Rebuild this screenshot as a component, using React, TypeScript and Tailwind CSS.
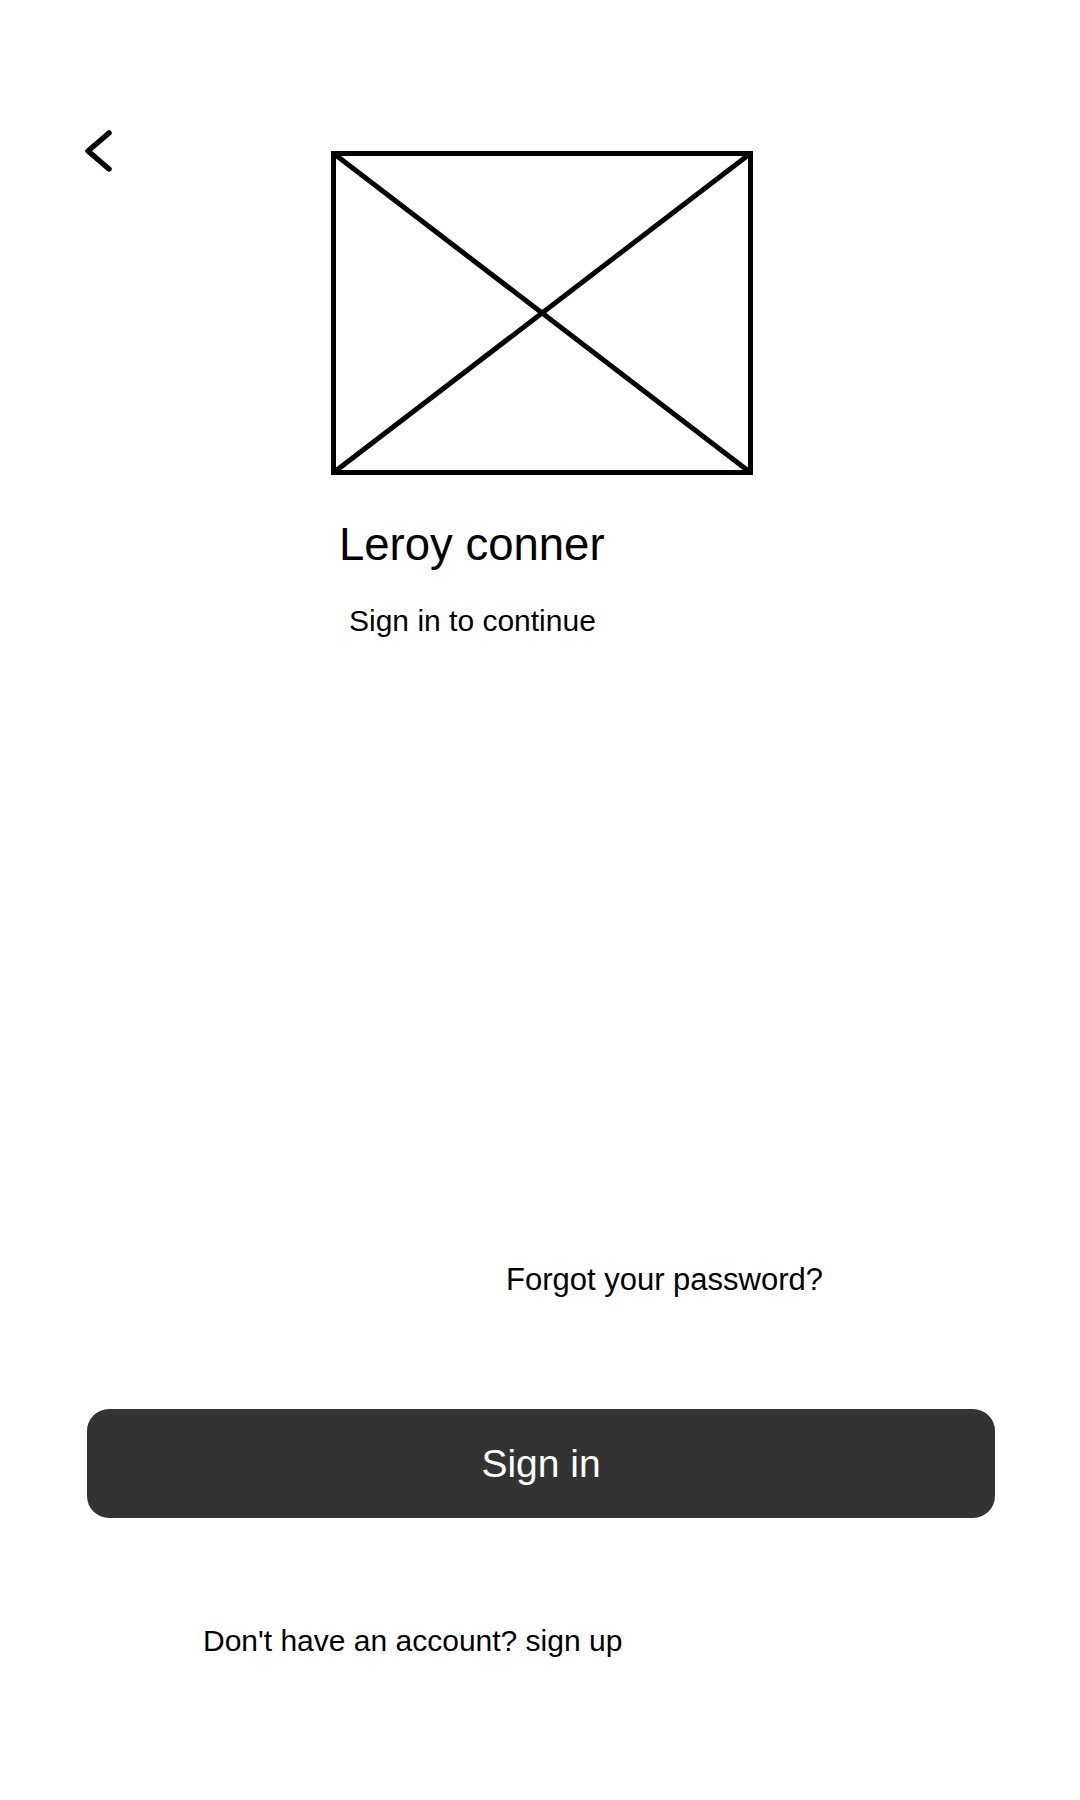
export default function App() {
  return (
    <div className="min-h-[1800px] w-[1080px] bg-white text-black font-['Liberation_Sans',Arial,sans-serif]">
      {/* top: back button + image placeholder */}
      <div className="flex items-start pl-[83px] pt-[129px]">
        <button className="h-[44px] w-[30px]" aria-label="Back">
          <svg width="30" height="44" viewBox="0 0 30 44" fill="none">
            <polyline
              points="26,4 5,22 26,40"
              stroke="#000"
              strokeWidth="5.5"
              strokeLinecap="round"
              strokeLinejoin="round"
            />
          </svg>
        </button>
        <div className="ml-[218px] mt-[22px]">
          <svg width="422" height="324" viewBox="0 0 422 324" fill="none">
            <rect x="2.5" y="2.5" width="417" height="319" stroke="#000" strokeWidth="5" />
            <line x1="2" y1="2" x2="420" y2="322" stroke="#000" strokeWidth="5" />
            <line x1="420" y1="2" x2="2" y2="322" stroke="#000" strokeWidth="5" />
          </svg>
        </div>
      </div>

      <div className="mt-[47px] pl-[339px] text-[45.5px] leading-none">Leroy conner</div>
      <div className="mt-[38px] pl-[349px] text-[30px] leading-none">Sign in to continue</div>

      <div className="mt-[628px] pl-[506px] text-[31px] leading-none">Forgot your password?</div>

      <div className="mt-[114px] pl-[87px]">
        <button className="flex h-[109px] w-[908px] items-center justify-center rounded-[22px] bg-[#333333] text-[39px] leading-none text-white">
          Sign in
        </button>
      </div>

      <div className="mt-[108px] pl-[203px] text-[30px] leading-none">
        Don't have an account? sign up
      </div>
    </div>
  );
}
